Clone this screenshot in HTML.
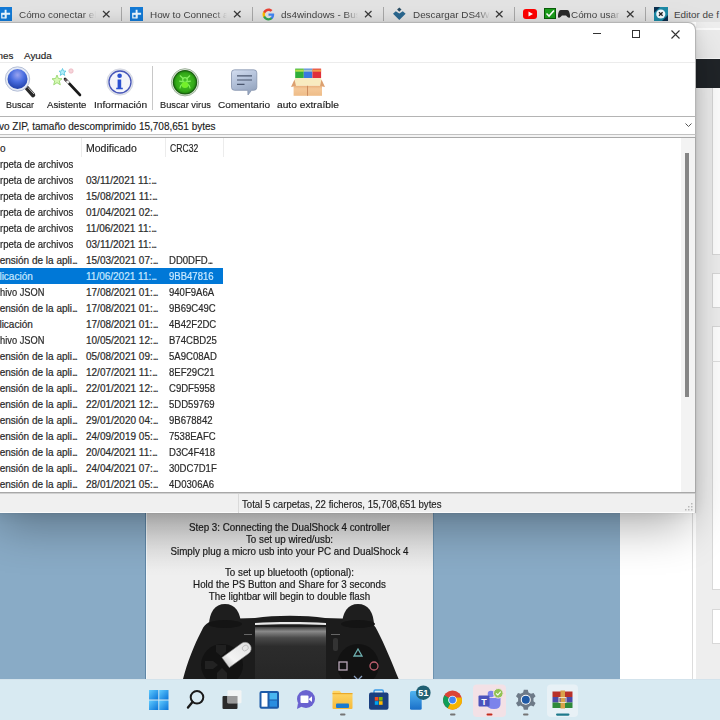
<!DOCTYPE html>
<html><head><meta charset="utf-8">
<style>
*{box-sizing:border-box}
html,body{margin:0;padding:0}
body{width:720px;height:720px;overflow:hidden;position:relative;background:#fff;font-family:"Liberation Sans",sans-serif;color:#222}
.a{position:absolute}
.t{position:absolute;white-space:nowrap;line-height:1}
/* chrome tab strip */
#tabs{left:0;top:0;width:720px;height:22px;background:#e3e3e3}
.ttl{font-size:9.9px;color:#444;}
.fade{-webkit-mask-image:linear-gradient(90deg,#000 0,#000 64px,transparent 77px);width:80px;overflow:hidden}
.sep{position:absolute;width:1px;background:#a8a8a8;top:7px;height:14px}
.x{position:absolute;font-size:12px;line-height:1;color:#333}
/* right side chrome content */
#rside{left:696px;top:22px;width:25px;height:658px;background:#eeeeee}
/* page below window */
#blue1{left:0;top:513px;width:146px;height:167px;background:#89abc6;border-right:1px solid #5f86a6}
#card{left:146px;top:513px;width:287px;height:167px;background:#efefef;overflow:hidden;border-left:1px solid #f4f8fa}
#blue2{left:433px;top:513px;width:187px;height:167px;background:#89abc6;border-left:1px solid #6e93b0}
#white2{left:620px;top:513px;width:73px;height:167px;background:#fff;border-right:1px solid #dcdcdc}
/* window */
#win{left:-10px;top:22px;width:706px;height:491px;background:#fff;border-top-right-radius:8px;border:1px solid #b5b5b5;border-left:0;box-shadow:0 20px 44px -8px rgba(0,0,0,.33),0 0 14px rgba(0,0,0,.08),0 0 2px rgba(0,0,0,.1)}
.menu{font-size:9.9px;color:#222;-webkit-text-stroke:0.15px #222}
.tbl{font-size:10px;color:#222;-webkit-text-stroke:0.15px #222}
.lbl{font-size:9.7px;color:#222;-webkit-text-stroke:0.15px #222;transform-origin:0 0}
.row{font-size:10px;color:#2a2a2a;-webkit-text-stroke:0.2px #2a2a2a}
.sel{color:#c8e8ff;-webkit-text-stroke:0.2px #c8e8ff}
.el{letter-spacing:-1.3px}
.crc{transform:scaleX(.955);transform-origin:0 0}
.nm{transform-origin:0 0}
/* taskbar */
#taskbar{left:0;top:679px;width:720px;height:41px;background:#d8eaf2;border-top:1px solid #d3e3ec}
</style></head><body>
<div id="tabs" class="a">
 <div class="sep" style="left:121px"></div>
 <div class="sep" style="left:252px"></div>
 <div class="sep" style="left:383px"></div>
 <div class="sep" style="left:514px"></div>
 <div class="sep" style="left:645px"></div>
 <!-- tab1 -->
 <div class="a" style="left:-1px;top:7px;width:13px;height:13.5px;background:#137ad6"><svg width="13" height="13" viewBox="0 0 13 13" style="position:absolute;left:0;top:0"><path d="M2.8 6.8h4v4h-4z" stroke="#e8f6ff" stroke-width="1.3" fill="none"/><path d="M2.3 6.8h8.8M6.6 2.8v8.4" stroke="#e8f6ff" stroke-width="1.9" fill="none"/></svg></div>
 <div class="t ttl fade" style="left:19px;top:10px;">Cómo conectar el</div>
 <svg class="a" style="left:102px;top:10px" width="9" height="8"><path d="M1 1L7.5 7.2M7.5 1L1 7.2" stroke="#3a3a3a" stroke-width="1.2"/></svg>
 <!-- tab2 -->
 <div class="a" style="left:130px;top:7px;width:13px;height:13.5px;background:#137ad6"><svg width="13" height="13" viewBox="0 0 13 13" style="position:absolute;left:0;top:0"><path d="M2.8 6.8h4v4h-4z" stroke="#e8f6ff" stroke-width="1.3" fill="none"/><path d="M2.3 6.8h8.8M6.6 2.8v8.4" stroke="#e8f6ff" stroke-width="1.9" fill="none"/></svg></div>
 <div class="t ttl fade" style="left:150px;top:10px;">How to Connect a</div>
 <svg class="a" style="left:233px;top:10px" width="9" height="8"><path d="M1 1L7.5 7.2M7.5 1L1 7.2" stroke="#3a3a3a" stroke-width="1.2"/></svg>
 <!-- tab3 google -->
 <svg class="a" style="left:262px;top:8px" width="13" height="13" viewBox="0 0 24 24"><path d="M22.5 12.2c0-.8-.1-1.5-.2-2.2H12v4.2h5.9c-.3 1.4-1 2.5-2.2 3.3v2.7h3.6c2-1.9 3.2-4.700 3.2-8z" fill="#4285f4"/><path d="M12 23c3 0 5.500-1 7.300-2.700l-3.600-2.700c-1 .7-2.200 1.100-3.700 1.100-2.800 0-5.200-1.900-6.100-4.500H2.200v2.800C4 20.500 7.700 23 12 23z" fill="#34a853"/><path d="M5.900 14.200c-.2-.7-.4-1.400-.4-2.200s.1-1.500.4-2.200V7H2.200C1.400 8.500 1 10.200 1 12s.4 3.500 1.200 5l3.700-2.800z" fill="#fbbc05"/><path d="M12 5.400c1.600 0 3.100.6 4.200 1.700l3.200-3.200C17.500 2.100 15 1 12 1 7.700 1 4 3.500 2.200 7l3.700 2.800c.9-2.600 3.300-4.400 6.100-4.400z" fill="#ea4335"/></svg>
 <div class="t ttl fade" style="left:281px;top:10px;">ds4windows - Busc</div>
 <svg class="a" style="left:364px;top:10px" width="9" height="8"><path d="M1 1L7.5 7.2M7.5 1L1 7.2" stroke="#3a3a3a" stroke-width="1.2"/></svg>
 <!-- tab4 -->
 <svg class="a" style="left:388px;top:4px" width="22" height="20" viewBox="388 4 22 20"><path d="M393 13.8 L395.8 11.2 L399.3 13.6 L402.8 11.2 L405.6 13.8 L399.3 20Z" fill="#2b6890"/><path d="M399.3 7.4 L401.5 9.6 L399.3 11.8 L397.1 9.6Z" fill="#2a4e66"/></svg>
 <div class="t ttl fade" style="left:413px;top:10px;">Descargar DS4Wi</div>
 <svg class="a" style="left:495px;top:10px" width="9" height="8"><path d="M1 1L7.5 7.2M7.5 1L1 7.2" stroke="#3a3a3a" stroke-width="1.2"/></svg>
 <!-- tab5 -->
 <div class="a" style="left:523px;top:9px;width:14px;height:10px;background:#f00;border-radius:3px"><svg width="14" height="10" style="position:absolute;left:0;top:0"><path d="M5.5 2.500v5l4.500-2.500z" fill="#fff"/></svg></div>
 <div class="a" style="left:544px;top:8px;width:12px;height:11px;background:#1b9e1b;border:1px solid #0a5c0a"><svg width="10" height="9" style="position:absolute;left:0;top:0"><path d="M1.500 4.500l2.500 2.500 5-5.500" stroke="#fff" stroke-width="1.600" fill="none"/></svg></div>
 <svg class="a" style="left:558px;top:10px" width="12" height="8" viewBox="0 0 12 8"><path d="M3 0h6c2 0 2.500 2 3 5s-1 3.500-2.500 2L8 5.500H4L2.500 7C1 8.500-.5 8 0 5S1 0 3 0z" fill="#2b2b2b"/></svg>
 <div class="t ttl" style="left:571px;top:10px;width:50px;overflow:hidden;-webkit-mask-image:linear-gradient(90deg,#000 0,#000 38px,transparent 50px)">Cómo usar</div>
 <svg class="a" style="left:626px;top:10px" width="9" height="8"><path d="M1 1L7.5 7.2M7.5 1L1 7.2" stroke="#3a3a3a" stroke-width="1.2"/></svg>
 <!-- tab6 -->
 <svg class="a" style="left:654px;top:7px" width="14" height="14" viewBox="0 0 14 14"><rect width="14" height="14" fill="#1c8aa6"/><path d="M0 0H6L0 6Z" fill="#0c2f4e"/><path d="M14 14H8L14 8Z" fill="#0c2f4e"/><circle cx="6.8" cy="7" r="4.6" fill="#f4fbff"/><path d="M5 5.2L8.6 8.8M8.6 5.2L5 8.8" stroke="#222" stroke-width="1.3"/></svg>
 <div class="t ttl" style="left:674px;top:10px;">Editor de f</div>
</div>

<div id="rside" class="a">
 <div class="a" style="left:0;top:6px;width:25px;height:2px;background:#fafafa"></div>
 <div class="a" style="left:0;top:8px;width:25px;height:29px;background:#ebebeb"></div>
 <div class="a" style="left:0;top:36px;width:25px;height:1px;background:#f7f7f7"></div>
 <div class="a" style="left:0;top:37px;width:25px;height:29px;background:#202428"></div>
 <div class="a" style="left:16px;top:66px;width:9px;height:167px;background:#fff;border-left:1px solid #d8d8d8;border-bottom:1px solid #d8d8d8"></div>
 <div class="a" style="left:16px;top:251px;width:9px;height:35px;background:#fff;border:1px solid #d8d8d8;border-right:0"></div>
 <div class="a" style="left:16px;top:304px;width:9px;height:264px;background:#fff;border:1px solid #d8d8d8;border-right:0"></div>
 <div class="a" style="left:16px;top:339px;width:9px;height:1px;background:#e0e0e0"></div>
 <div class="a" style="left:16px;top:587px;width:9px;height:35px;background:#fff;border:1px solid #d8d8d8;border-right:0"></div>
</div>

<div id="blue1" class="a"></div>
<div id="card" class="a">
 <div class="a" style="left:0;top:0;width:287px;height:60px;background:linear-gradient(#d8d8d8,#efefef)"></div>
 <div id="steps" class="a" style="left:-1px;top:8px;width:287px;text-align:center;font-size:10.6px;line-height:12px;color:#1a1a1a;-webkit-text-stroke:0.2px #1a1a1a">
  <div style="transform:scaleX(.925)">Step 3: Connecting the DualShock 4 controller</div>
  <div style="transform:scaleX(.925)">To set up wired/usb:</div>
  <div style="transform:scaleX(.925)">Simply plug a micro usb into your PC and DualShock 4</div>
  <div style="height:9px"></div>
  <div style="transform:scaleX(.925)">To set up bluetooth (optional):</div>
  <div style="transform:scaleX(.925)">Hold the PS Button and Share for 3 seconds</div>
  <div style="transform:scaleX(.925)">The lightbar will begin to double flash</div>
 </div>
 <svg class="a" style="left:-1px;top:0" width="287" height="167" viewBox="146 513 287 167">
  <defs>
   <linearGradient id="tp" x1="0" y1="0" x2="0" y2="1"><stop offset="0" stop-color="#3a3a3a"/><stop offset="0.08" stop-color="#8a8a8a"/><stop offset="0.2" stop-color="#4a4a4a"/><stop offset="0.36" stop-color="#2c2c2c"/><stop offset="1" stop-color="#262626"/></linearGradient>
   <linearGradient id="th" x1="0" y1="1" x2="1" y2="0"><stop offset="0" stop-color="#bbb"/><stop offset="0.35" stop-color="#f4f4f4"/><stop offset="1" stop-color="#e0e0e0"/></linearGradient>
  </defs>
  <!-- body -->
  <path d="M182.5 681 C187 663 194 645 202 630 C205 623 211 620 222 619 L255 618 C275 615 305 615 325 618 L357 619 C368 620 374 623 377 630 C385 645 392 663 399.5 681 Z" fill="#1c1c1c"/>
  <!-- bumpers -->
  <path d="M209 626 C209 612 215 604 225 604 C235 604 241 612 241 626 Z" fill="#1e1e1e"/>
  <path d="M342 626 C342 612 348 604 358 604 C368 604 374 612 374 626 Z" fill="#1e1e1e"/>
  <ellipse cx="225" cy="624" rx="17" ry="4" fill="#141414"/>
  <ellipse cx="358" cy="624" rx="17" ry="4" fill="#141414"/>
  <!-- lightbar -->
  <path d="M255 623 C275 621.8 305 621.8 326 623 L326 625 C305 624 275 624 255 625 Z" fill="#e8e8e8"/>
  <!-- touchpad -->
  <rect x="255" y="627" width="71" height="54" fill="url(#tp)"/>
  <!-- dpad area -->
  <circle cx="222" cy="665" r="21" fill="#121212"/>
  <circle cx="358" cy="665" r="21" fill="#121212"/>
  <!-- thumb -->
  <path d="M205 661 L213 661 L218 665 L213 669 L205 669Z" fill="#222"/>
  <path d="M217 681 L217 673 L222 668 L227 673 L227 681Z" fill="#222"/>
  <path d="M216 645 L226 645 L226 652 L221 656 L216 652Z" fill="#202020"/>
  <path d="M221.95 657.58 L241.35 643.48 A6.2 6.2 0 0 1 248.65 653.52 L229.25 667.62 Z" fill="url(#th)" stroke="#888" stroke-width="0.6"/>
  <ellipse cx="245.3" cy="648" rx="3.2" ry="2.6" transform="rotate(-36 245.3 648)" fill="none" stroke="#b8b8b8" stroke-width="0.8"/>
  <!-- buttons -->
  <path d="M354 656 L358 649 L362 656 Z" fill="none" stroke="#6fb0b0" stroke-width="1.3"/>
  <rect x="339" y="662" width="8" height="8" fill="none" stroke="#b9a8b9" stroke-width="1.3"/>
  <circle cx="374" cy="666" r="4" fill="none" stroke="#c06070" stroke-width="1.3"/>
  <path d="M354 676 L362 684 M362 676 L354 684" stroke="#8aa0c0" stroke-width="1.3"/>
  <rect x="333" y="638" width="5" height="13" rx="2" fill="#333"/>
  <rect x="244" y="634" width="8" height="1" fill="#666"/>
  <rect x="331" y="634" width="9" height="1" fill="#666"/>
 </svg>
</div>

<div id="blue2" class="a"></div>
<div id="white2" class="a"></div>
<div id="win" class="a"></div>
<!-- title buttons -->
<div class="a" style="left:593px;top:33px;width:8px;height:1px;background:#333"></div>
<div class="a" style="left:632px;top:30px;width:8px;height:8px;border:1px solid #333"></div>
<svg class="a" style="left:671px;top:30px" width="9" height="9"><path d="M0.5 0.5L8.5 8.5M8.5 0.5L0.5 8.5" stroke="#333" stroke-width="1.1"/></svg>
<!-- menu -->
<div class="t menu" style="left:-8px;top:51px">ones</div>
<div class="t menu" style="left:24px;top:51px">Ayuda</div>
<div class="a" style="left:0;top:62px;width:695px;height:1px;background:#ececec"></div>
<svg class="a" style="left:0;top:62px" width="340" height="40" viewBox="0 62 340 40">
 <defs>
  <radialGradient id="lens" cx="0.5" cy="0.3" r="0.75"><stop offset="0" stop-color="#9aa4f0"/><stop offset="0.45" stop-color="#4a6ee0"/><stop offset="1" stop-color="#1a3aa0"/></radialGradient>
  <radialGradient id="vg" cx="0.5" cy="0.5" r="0.5"><stop offset="0" stop-color="#4ac82a"/><stop offset="0.8" stop-color="#34aa18"/><stop offset="1" stop-color="#228a10"/></radialGradient>
  <linearGradient id="cb" x1="0" y1="0" x2="0.4" y2="1"><stop offset="0" stop-color="#d4def0"/><stop offset="0.5" stop-color="#b4c2da"/><stop offset="1" stop-color="#96a6c0"/></linearGradient>
  <linearGradient id="bx" x1="0" y1="0" x2="0" y2="1"><stop offset="0" stop-color="#e8b07c"/><stop offset="0.3" stop-color="#f4c898"/><stop offset="1" stop-color="#eebc88"/></linearGradient>
 </defs>
 <!-- magnifier -->
 <path d="M26 87 L33 95" stroke="#2a2a2a" stroke-width="4.5" stroke-linecap="round"/>
 <path d="M28 87.5 L34 94" stroke="#c8c8c8" stroke-width="1"/>
 <circle cx="17.5" cy="79" r="12.2" fill="#e6ebf5" stroke="#aeb9d2" stroke-width="0.9"/>
 <circle cx="17.5" cy="79" r="10" fill="url(#lens)"/>
 <!-- wand -->
 <path d="M65 79 L80 95" stroke="#1a1a1a" stroke-width="2.6" stroke-linecap="round"/>
 <path d="M65 79 L66.8 81" stroke="#6a5a60" stroke-width="2.6"/><path d="M66.8 81 L68.8 83.2" stroke="#f0f0f0" stroke-width="2.6"/>
 <path d="M57 75 L58.4 78.5 L62 78.8 L59.3 81 L60.3 84.8 L57 82.7 L53.7 84.8 L54.7 81 L52 78.8 L55.6 78.5Z" fill="#d6f8b4" stroke="#98d870" stroke-width="0.9"/>
 <path d="M62.5 68.5 L63.5 71 L66 71.2 L64.1 72.8 L64.8 75.4 L62.5 74 L60.2 75.4 L60.9 72.8 L59 71.2 L61.5 71Z" fill="#b4f0fc" stroke="#60c8e0" stroke-width="0.9"/>
 <circle cx="71" cy="71" r="2.2" fill="#f6d4da" stroke="#eab0bc" stroke-width="0.7"/>
 <!-- info -->
 <circle cx="120" cy="82" r="13.2" fill="#dfe2ec" stroke="#c9cdd9" stroke-width="0.6"/>
 <circle cx="120" cy="82" r="11" fill="#f3f4fa" stroke="#4756b8" stroke-width="1.3"/>
 <circle cx="119.6" cy="75.8" r="2.3" fill="#2a50d0"/>
 <path d="M117.6 79.5h3.6v8.2h1.6v1.6h-6.6v-1.6h1.4z" fill="#2a50d0"/>
 <!-- virus -->
 <circle cx="185" cy="82.3" r="13.6" fill="#dfe8dc" stroke="#9fb39c" stroke-width="1"/>
 <circle cx="185" cy="82.3" r="12.2" fill="#1b5e10"/>
 <circle cx="185" cy="82.3" r="11" fill="url(#vg)"/>
 <g stroke="#86f060" stroke-width="1.2" fill="none" stroke-linecap="round">
  <path d="M182.8 78.3 L180.2 75.8 M187.2 78.3 L189.8 75.8 M182.4 81.6 L179.6 81.2 M187.6 81.6 L190.4 81.2 M182 84.5 Q180.3 85.5 180 88 M188 84.5 Q189.7 85.5 190 88"/>
  <circle cx="185" cy="80" r="2.3"/>
 </g>
 <ellipse cx="185" cy="85" rx="3.4" ry="2.9" fill="#74f02a"/>
 <!-- comment -->
 <path d="M234.5 69.8 H253.8 Q256.8 69.8 256.8 72.8 V87.3 Q256.8 90.3 253.8 90.3 H251.5 L248 95 L247.8 90.3 H234.5 Q231.5 90.3 231.5 87.3 V72.8 Q231.5 69.8 234.5 69.8Z" fill="url(#cb)" stroke="#8593ad" stroke-width="0.8"/>
 <path d="M237 75.8h15 M237 80h15 M237 84.3h7.5" stroke="#4a566e" stroke-width="1.2"/>
 <!-- box -->
 <rect x="295.2" y="68.6" width="8.6" height="9.5" fill="#2fae3a"/>
 <rect x="303.8" y="68.6" width="8.6" height="9.5" fill="#3a78e0"/>
 <rect x="312.4" y="68.6" width="8.7" height="9.5" fill="#e0303a"/>
 <rect x="295.2" y="69.5" width="8.6" height="2.2" fill="#b4e048"/>
 <rect x="303.8" y="69.5" width="8.6" height="2.2" fill="#a8c8c8"/>
 <rect x="312.4" y="69.5" width="8.7" height="2.2" fill="#f49a48"/>
 <path d="M295 78 H321 L322.5 85.8 H293.6Z" fill="#f8ebc0"/>
 <path d="M291 87 L294.5 79.5 L296 86Z M325 87 L321.5 79.5 L320 86Z" fill="#dca070"/>
 <rect x="293.6" y="85.8" width="28.4" height="10" fill="url(#bx)"/>
 <rect x="307" y="85.8" width="0.9" height="10" fill="#c8875a"/>
</svg>

<!-- toolbar labels -->
<div class="t lbl" style="left:6px;top:100px;transform:scaleX(0.93)">Buscar</div>
<div class="t lbl" style="left:46.5px;top:100px;transform:scaleX(0.99)">Asistente</div>
<div class="t lbl" style="left:93.5px;top:100px;transform:scaleX(1.05)">Información</div>
<div class="a" style="left:152px;top:66px;width:1px;height:44px;background:#c8c8c8"></div>
<div class="t lbl" style="left:160px;top:100px;transform:scaleX(0.955)">Buscar virus</div>
<div class="t lbl" style="left:218px;top:100px;transform:scaleX(1.04)">Comentario</div>
<div class="t lbl" style="left:277px;top:100px;transform:scaleX(1.055)">auto extraíble</div>
<!-- address bar -->
<div class="a" style="left:-2px;top:116px;width:698px;height:19px;border:1px solid #b4b4b4;border-bottom-color:#c2c2c2;background:#fff"></div>
<div class="t tbl" style="left:-1px;top:122px;color:#1a1a1a">vo ZIP, tamaño descomprimido 15,708,651 bytes</div>
<svg class="a" style="left:685px;top:123px" width="7" height="5"><path d="M0.5 0.5L3.5 3.5L6.5 0.5" stroke="#555" stroke-width="1" fill="none"/></svg>
<div class="a" style="left:0;top:135px;width:695px;height:2px;background:#f4f4f4"></div>
<!-- list -->
<div class="a" style="left:-2px;top:137px;width:698px;height:356px;border:1px solid #a8a8a8;background:#fff"></div>
<div class="a" style="left:81px;top:138px;width:1px;height:19px;background:#ececec"></div>
<div class="a" style="left:165px;top:138px;width:1px;height:19px;background:#ececec"></div>
<div class="a" style="left:223px;top:138px;width:1px;height:19px;background:#ececec"></div>
<div class="t tbl" style="left:0px;top:143.5px">o</div>
<div class="t tbl" style="left:86px;top:143.5px;transform:scaleX(1.05);transform-origin:0 0">Modificado</div>
<div class="t tbl" style="left:170px;top:143.5px;transform:scaleX(.86);transform-origin:0 0">CRC32</div>
<!-- scrollbar -->
<div class="a" style="left:681px;top:138px;width:14px;height:354px;background:#f3f3f3"></div>
<div class="a" style="left:685px;top:153px;width:4px;height:244px;background:#858585"></div>
<!-- selected -->
<div class="a" style="left:0;top:268px;width:223px;height:16px;background:#0078d7"></div>
<div class="t row nm" style="left:-0.2px;top:160px;transform:scaleX(.955)">rpeta de archivos</div>
<div class="t row nm" style="left:-0.2px;top:176px;transform:scaleX(.955)">rpeta de archivos</div>
<div class="t row" style="left:86px;top:176px">03/11/2021 11:<span class="el">...</span></div>
<div class="t row nm" style="left:-0.2px;top:192px;transform:scaleX(.955)">rpeta de archivos</div>
<div class="t row" style="left:86px;top:192px">15/08/2021 11:<span class="el">...</span></div>
<div class="t row nm" style="left:-0.2px;top:208px;transform:scaleX(.955)">rpeta de archivos</div>
<div class="t row" style="left:86px;top:208px">01/04/2021 02:<span class="el">...</span></div>
<div class="t row nm" style="left:-0.2px;top:224px;transform:scaleX(.955)">rpeta de archivos</div>
<div class="t row" style="left:86px;top:224px">11/06/2021 11:<span class="el">...</span></div>
<div class="t row nm" style="left:-0.2px;top:240px;transform:scaleX(.955)">rpeta de archivos</div>
<div class="t row" style="left:86px;top:240px">03/11/2021 11:<span class="el">...</span></div>
<div class="t row nm" style="left:-0.3px;top:256px">ensión de la apli<span class="el">...</span></div>
<div class="t row" style="left:86px;top:256px">15/03/2021 07:<span class="el">...</span></div>
<div class="t row crc" style="left:169px;top:256px">DD0DFD<span class="el">...</span></div>
<div class="t row sel nm" style="left:-0.6px;top:272px">licación</div>
<div class="t row sel" style="left:86px;top:272px">11/06/2021 11:<span class="el">...</span></div>
<div class="t row sel crc" style="left:169px;top:272px">9BB47816</div>
<div class="t row nm" style="left:-0.3px;top:288px;transform:scaleX(.93)">hivo JSON</div>
<div class="t row" style="left:86px;top:288px">17/08/2021 01:<span class="el">...</span></div>
<div class="t row crc" style="left:169px;top:288px">940F9A6A</div>
<div class="t row nm" style="left:-0.3px;top:304px">ensión de la apli<span class="el">...</span></div>
<div class="t row" style="left:86px;top:304px">17/08/2021 01:<span class="el">...</span></div>
<div class="t row crc" style="left:169px;top:304px">9B69C49C</div>
<div class="t row nm" style="left:-0.6px;top:320px">licación</div>
<div class="t row" style="left:86px;top:320px">17/08/2021 01:<span class="el">...</span></div>
<div class="t row crc" style="left:169px;top:320px">4B42F2DC</div>
<div class="t row nm" style="left:-0.3px;top:336px;transform:scaleX(.93)">hivo JSON</div>
<div class="t row" style="left:86px;top:336px">10/05/2021 12:<span class="el">...</span></div>
<div class="t row crc" style="left:169px;top:336px">B74CBD25</div>
<div class="t row nm" style="left:-0.3px;top:352px">ensión de la apli<span class="el">...</span></div>
<div class="t row" style="left:86px;top:352px">05/08/2021 09:<span class="el">...</span></div>
<div class="t row crc" style="left:169px;top:352px">5A9C08AD</div>
<div class="t row nm" style="left:-0.3px;top:368px">ensión de la apli<span class="el">...</span></div>
<div class="t row" style="left:86px;top:368px">12/07/2021 11:<span class="el">...</span></div>
<div class="t row crc" style="left:169px;top:368px">8EF29C21</div>
<div class="t row nm" style="left:-0.3px;top:384px">ensión de la apli<span class="el">...</span></div>
<div class="t row" style="left:86px;top:384px">22/01/2021 12:<span class="el">...</span></div>
<div class="t row crc" style="left:169px;top:384px">C9DF5958</div>
<div class="t row nm" style="left:-0.3px;top:400px">ensión de la apli<span class="el">...</span></div>
<div class="t row" style="left:86px;top:400px">22/01/2021 12:<span class="el">...</span></div>
<div class="t row crc" style="left:169px;top:400px">5DD59769</div>
<div class="t row nm" style="left:-0.3px;top:416px">ensión de la apli<span class="el">...</span></div>
<div class="t row" style="left:86px;top:416px">29/01/2020 04:<span class="el">...</span></div>
<div class="t row crc" style="left:169px;top:416px">9B678842</div>
<div class="t row nm" style="left:-0.3px;top:432px">ensión de la apli<span class="el">...</span></div>
<div class="t row" style="left:86px;top:432px">24/09/2019 05:<span class="el">...</span></div>
<div class="t row crc" style="left:169px;top:432px">7538EAFC</div>
<div class="t row nm" style="left:-0.3px;top:448px">ensión de la apli<span class="el">...</span></div>
<div class="t row" style="left:86px;top:448px">20/04/2021 11:<span class="el">...</span></div>
<div class="t row crc" style="left:169px;top:448px">D3C4F418</div>
<div class="t row nm" style="left:-0.3px;top:464px">ensión de la apli<span class="el">...</span></div>
<div class="t row" style="left:86px;top:464px">24/04/2021 07:<span class="el">...</span></div>
<div class="t row crc" style="left:169px;top:464px">30DC7D1F</div>
<div class="t row nm" style="left:-0.3px;top:480px">ensión de la apli<span class="el">...</span></div>
<div class="t row" style="left:86px;top:480px">28/01/2021 05:<span class="el">...</span></div>
<div class="t row crc" style="left:169px;top:480px">4D0306A6</div>
<!-- status bar -->
<div class="a" style="left:0;top:493px;width:695px;height:20px;background:#f0f0f0;border-top:1px solid #d0d0d0"></div>
<div class="a" style="left:0;top:512px;width:694px;height:1px;background:#fbfbfb"></div>
<svg class="a" style="left:684px;top:502px" width="10" height="10"><g fill="#b8b8b8"><rect x="7" y="1" width="1.5" height="1.5"/><rect x="4" y="4" width="1.5" height="1.5"/><rect x="7" y="4" width="1.5" height="1.5"/><rect x="1" y="7" width="1.5" height="1.5"/><rect x="4" y="7" width="1.5" height="1.5"/><rect x="7" y="7" width="1.5" height="1.5"/></g></svg>
<div class="a" style="left:238px;top:494px;width:1px;height:19px;background:#dadada"></div>
<div class="t tbl" style="left:241.5px;top:499.5px;color:#1a1a1a;transform:scaleX(.962);transform-origin:0 0">Total 5 carpetas, 22 ficheros, 15,708,651 bytes</div>


<div id="taskbar" class="a">
<svg class="a" style="left:0;top:0" width="720" height="40" viewBox="0 680 720 40">
 <defs>
  <linearGradient id="win11" x1="0" y1="0" x2="1" y2="1"><stop offset="0" stop-color="#5fcbff"/><stop offset="1" stop-color="#0a74d8"/></linearGradient>
  <linearGradient id="fold" x1="0" y1="0" x2="0" y2="1"><stop offset="0" stop-color="#ffd869"/><stop offset="1" stop-color="#f5b93a"/></linearGradient>
  <linearGradient id="phone" x1="0" y1="0" x2="0" y2="1"><stop offset="0" stop-color="#50b4f0"/><stop offset="1" stop-color="#1a6fc8"/></linearGradient>
 </defs>
 <!-- start -->
 <rect x="149" y="690" width="9.3" height="9.5" fill="url(#win11)"/>
 <rect x="159.2" y="690" width="9.3" height="9.5" fill="url(#win11)"/>
 <rect x="149" y="700.5" width="9.3" height="9.5" fill="url(#win11)"/>
 <rect x="159.2" y="700.5" width="9.3" height="9.5" fill="url(#win11)"/>
 <!-- search -->
 <circle cx="197" cy="697.3" r="6.3" fill="none" stroke="#1a1a1a" stroke-width="2"/>
 <path d="M192.5 702 L188 707.5" stroke="#1a1a1a" stroke-width="2.4" stroke-linecap="round"/>
 <!-- task view -->
 <rect x="222.5" y="696" width="15" height="13" rx="1" fill="#2a2a2a"/>
 <rect x="227.5" y="690.3" width="14" height="13" rx="1" fill="#f4f4f4" opacity=".92"/>
 <rect x="227.5" y="696" width="10" height="7.3" fill="#9a9a9a"/>
 <!-- widgets -->
 <rect x="259.5" y="691" width="19.5" height="17.7" rx="2" fill="#1c5aa8"/>
 <rect x="261.5" y="693" width="6" height="13.7" fill="#ffffff"/>
 <rect x="269.5" y="693" width="7.5" height="6.5" fill="#49b6f0"/>
 <rect x="269.5" y="700.5" width="7.5" height="6.2" fill="#2a8ee0"/>
 <!-- chat -->
 <circle cx="306" cy="699" r="9" fill="#6a62d0"/>
 <path d="M298 703 L297 709 L303 706Z" fill="#6a62d0"/>
 <rect x="300.5" y="695.5" width="8" height="7.5" rx="1" fill="#fff"/>
 <path d="M308.5 699.2 L312 696.3 V702 Z" fill="#fff"/>
 <!-- explorer -->
 <path d="M332.5 692 Q332.5 690.8 333.7 690.8 H339.5 L341.5 693 H351.5 Q352.5 693 352.5 694 V708 Q352.5 709 351.5 709 H333.5 Q332.5 709 332.5 708Z" fill="url(#fold)"/>
 <rect x="332.5" y="693" width="20" height="1.2" fill="#e9a92a"/>
 <rect x="336" y="703.5" width="13" height="4.5" rx="1" fill="#1a7ad0"/>
 <rect x="340" y="713.5" width="5.5" height="2" rx="1" fill="#757575"/>
 <!-- store -->
 <path d="M374 693 V691.3 Q374 690 375.3 690 H382 Q383.3 690 383.3 691.3 V693" fill="none" stroke="#3a9ae8" stroke-width="1.4"/>
 <rect x="369" y="692.5" width="19.5" height="17.2" rx="2" fill="#1a3f80"/>
 <rect x="374.8" y="697" width="3.6" height="3.6" fill="#f25022"/>
 <rect x="379" y="697" width="3.6" height="3.6" fill="#7fba00"/>
 <rect x="374.8" y="701.2" width="3.6" height="3.6" fill="#00a4ef"/>
 <rect x="379" y="701.2" width="3.6" height="3.6" fill="#ffb900"/>
 <!-- phone -->
 <rect x="410" y="691" width="11.7" height="18.7" rx="1.5" fill="url(#phone)"/>
 <circle cx="423.3" cy="692.7" r="7.3" fill="#1f5f72"/>
 <text x="423.3" y="696.3" font-size="9.5" font-family="Liberation Sans" fill="#fff" text-anchor="middle" font-weight="bold">51</text>
 <!-- chrome -->
 <circle cx="452.5" cy="700" r="9.5" fill="#db4437"/>
 <path d="M452.5 700 L444.3 695.25 A9.5 9.5 0 0 0 447.75 708.23 Z" fill="#0f9d58"/>
 <path d="M452.5 700 L447.75 708.23 A9.5 9.5 0 0 0 461.7 697.5 L452.5 697.5Z" fill="#f4b400"/>
 <path d="M444.3 695.25 L452.5 700 L447.75 708.23 L440 708.23 L440 690 Z" fill="#0f9d58" opacity="0"/>
 <circle cx="452.5" cy="700" r="4.3" fill="#fff"/>
 <circle cx="452.5" cy="700" r="3.4" fill="#4285f4"/>
 <rect x="450" y="713.5" width="5.5" height="2" rx="1" fill="#757575"/>
 <!-- teams -->
 <rect x="473" y="684.5" width="33" height="32.5" rx="4" fill="#f3e1e6"/>
 <circle cx="491" cy="694" r="3.3" fill="#7b83eb"/>
 <circle cx="497.5" cy="695.5" r="2.5" fill="#5059c9"/>
 <path d="M486 698 H500.5 V704 Q500.5 709 494 709 Q487 709 486 703Z" fill="#7b83eb"/>
 <rect x="478.5" y="695.5" width="11" height="11" rx="1" fill="#4b53bc"/>
 <text x="484" y="704.6" font-size="9" font-family="Liberation Sans" font-weight="bold" fill="#fff" text-anchor="middle">T</text>
 <circle cx="498.3" cy="693.3" r="4.8" fill="#92c353" stroke="#f3e1e6" stroke-width="1"/>
 <path d="M496 693.3 L497.8 695 L500.7 691.7" stroke="#fff" stroke-width="1.1" fill="none"/>
 <rect x="486.5" y="713.5" width="6" height="2" rx="1" fill="#c42b1c"/>
 <!-- settings -->
 <g transform="translate(525.8 699.7)">
  <path d="M-2 -10 H2 L2.7 -7.3 L5.2 -5.9 L7.8 -6.8 L9.8 -3.4 L7.7 -1.5 V1.5 L9.8 3.4 L7.8 6.8 L5.2 5.9 L2.7 7.3 L2 10 H-2 L-2.7 7.3 L-5.2 5.9 L-7.8 6.8 L-9.8 3.4 L-7.7 1.5 V-1.5 L-9.8 -3.4 L-7.8 -6.8 L-5.2 -5.9 L-2.7 -7.3Z" fill="#6d7a88"/>
  <circle r="5" fill="#fff"/>
  <circle r="4" fill="#1f5aa6"/>
 </g>
 <rect x="523" y="713.5" width="5.5" height="2" rx="1" fill="#757575"/>
 <!-- winrar -->
 <rect x="547" y="684.5" width="31" height="32.5" rx="4" fill="#e8f1f6"/>
 <rect x="552.5" y="691.5" width="20" height="5.5" fill="#b8302a"/>
 <rect x="552.5" y="697" width="20" height="5.5" fill="#4a4aa8"/>
 <rect x="552.5" y="702.5" width="20" height="5.5" fill="#2f8a3a"/>
 <rect x="560.5" y="690.5" width="4.5" height="18" fill="#d9a24a"/>
 <rect x="559" y="697.5" width="7" height="5" fill="none" stroke="#f0e0c0" stroke-width="1"/>
 <rect x="556" y="713.5" width="13.5" height="2.2" rx="1.1" fill="#1f7a8c"/>
</svg>
</div>

</body></html>
